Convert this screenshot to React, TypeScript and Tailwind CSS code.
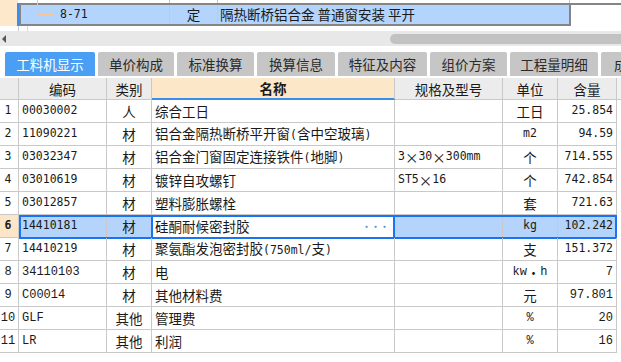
import React from 'react';

type Row = {
  n: string;
  code: string;
  type: string;
  name: string;
  spec: string;
  unit: string;
  qty: string;
  serif?: boolean;
};

const rows: Row[] = [
  { n: '1', code: '00030002', type: '人', name: '综合工日', spec: '', unit: '工日', qty: '25.854' },
  { n: '2', code: '11090221', type: '材', name: '铝合金隔热断桥平开窗(含中空玻璃)', spec: '', unit: 'm2', qty: '94.59' },
  { n: '3', code: '03032347', type: '材', name: '铝合金门窗固定连接铁件(地脚)', spec: '3×30×300mm', unit: '个', qty: '714.555' },
  { n: '4', code: '03010619', type: '材', name: '镀锌自攻螺钉', spec: 'ST5×16', unit: '个', qty: '742.854' },
  { n: '5', code: '03012857', type: '材', name: '塑料膨胀螺栓', spec: '', unit: '套', qty: '721.63' },
  { n: '6', code: '14410181', type: '材', name: '硅酮耐候密封胶', spec: '', unit: 'kg', qty: '102.242' },
  { n: '7', code: '14410219', type: '材', name: '聚氨酯发泡密封胶(750ml/支)', spec: '', unit: '支', qty: '151.372' },
  { n: '8', code: '34110103', type: '材', name: '电', spec: '', unit: 'kw·h', qty: '7', serif: true },
  { n: '9', code: 'C00014', type: '材', name: '其他材料费', spec: '', unit: '元', qty: '97.801', serif: true },
  { n: '10', code: 'GLF', type: '其他', name: '管理费', spec: '', unit: '%', qty: '20', serif: true },
  { n: '11', code: 'LR', type: '其他', name: '利润', spec: '', unit: '%', qty: '16', serif: true },
];

const tabs = [
  { label: '工料机显示', w: 'w-[90px]' },
  { label: '单价构成', w: 'w-[76px]' },
  { label: '标准换算', w: 'w-[77px]' },
  { label: '换算信息', w: 'w-[78px]' },
  { label: '特征及内容', w: 'w-[89px]' },
  { label: '组价方案', w: 'w-[77px]' },
  { label: '工程量明细', w: 'w-[88px]' },
  { label: '成本分析', w: 'w-[80px]' },
];

// latin runs get a narrow mono face, the rest stays in the CJK face
function Txt({ s, serif }: { s: string; serif?: boolean }) {
  const parts = s.split(/([\x21-\x7e]+)/).filter(Boolean);
  return (
    <>
      {parts.map((p, i) =>
        /^[\x21-\x7e]+$/.test(p) ? (
          <span
            key={i}
            className={
              serif
                ? "font-['Liberation_Mono',monospace] text-[12px]"
                : "font-['DejaVu_Sans_Mono',monospace] text-[11.5px]"
            }
          >
            {p}
          </span>
        ) : (
          <span key={i}>{p}</span>
        )
      )}
    </>
  );
}

const cols = 'grid grid-cols-[19px_88px_45px_243px_108px_55px_59px]';
const cell = 'border-r border-b border-[#c9c9c9] flex items-center overflow-hidden whitespace-nowrap';

export default function App() {
  return (
    <div className="w-[621px] h-[362px] overflow-hidden bg-white text-[13.5px] text-[#1a1a1a] font-['Noto_Sans_CJK_SC',sans-serif]">
      {/* upper tree grid, selected row */}
      <div className="relative h-[26px]">
        <div className="flex h-[3px]">
          <div className="w-[18px] bg-[#fde8cc]" />
          <div className="w-[152px] border-r border-[#c9c9c9]" />
          <div className="w-[48px] border-r border-[#c9c9c9]" />
          <div className="w-[352px] border-r border-[#c9c9c9]" />
        </div>
        <div className="flex h-[23px]">
          <div className="w-[17px] bg-[#fde8cc]" />
          <div className="w-[2px] bg-[#3b8cf0]" />
          <div className="flex w-[552px] bg-[#b3d4fc] border-2 border-[#858585]">
            <div className="w-[149px] border-r border-[#c3c9d4] flex items-center pl-[39px]">
              <Txt s="8-71" />
            </div>
            <div className="w-[48px] border-r border-[#c3c9d4] flex items-center justify-center">定</div>
            <div className="flex-1 flex items-center pl-[2px] whitespace-nowrap">隔热断桥铝合金 普通窗安装 平开</div>
          </div>
          <div className="flex-1 border-t-2 border-[#858585]" />
        </div>
        <svg className="absolute left-0 top-0" width="60" height="20">
          <path d="M37.5 0 V14.5 H53" fill="none" stroke="#f7c58c" strokeWidth="1" />
        </svg>
      </div>
      <div className="flex h-[5px]">
        <div className="w-[19px] border-r border-[#c9c9c9]" />
        <div className="w-[9px] border-r border-[#f3d2ad]" />
      </div>

      {/* horizontal scrollbar */}
      <div className="flex h-[15px] items-center bg-[#e8e8e8]">
        <svg className="ml-[2px]" width="5" height="8">
          <path d="M4 0 L0 4 L4 8 Z" fill="#555" />
        </svg>
        <div className="flex-1" />
        <div className="h-[10px] w-[231px] rounded-l-full bg-[#c2c2c2]" />
      </div>
      <div className="h-[6px]" />

      {/* tabs */}
      <div className="flex h-[24px] gap-[3px] pl-[5px] whitespace-nowrap">
        {tabs.map((t, i) => (
          <div
            key={t.label}
            className={`${t.w} shrink-0 rounded-t-[2px] flex items-center justify-center ${
              i === 0 ? 'bg-[#4a9ff5] text-white' : 'bg-[#c6c6c6] text-[#2b2b2b]'
            }`}
          >
            {t.label}
          </div>
        ))}
      </div>
      <div className="h-[2px]" />

      {/* header */}
      <div className="flex h-[22px] bg-[#ececec]">
        <div className={`${cols} h-full`}>
          <div className={cell} />
          <div className={`${cell} justify-center`}>编码</div>
          <div className={`${cell} justify-center`}>类别</div>
          <div className="flex items-center justify-center border-r border-b-2 border-r-[#c9c9c9] border-b-[#3a8ee6] bg-[#fde7c9] font-bold">
            名称
          </div>
          <div className={`${cell} justify-center`}>规格及型号</div>
          <div className={`${cell} justify-center`}>单位</div>
          <div className={`${cell} justify-center`}>含量</div>
        </div>
        <div className="flex-1 border-b border-[#c9c9c9] bg-[#f2f2f2]" />
      </div>

      {/* body */}
      {rows.map((r) => {
        const sel = r.n === '6';
        const bg = sel ? 'bg-[#b4d4fb]' : '';
        return (
          <div key={r.n} className={`relative ${cols} h-[23px]`}>
            <div
              className={`${cell} justify-center pr-[2px] ${
                sel ? 'bg-[#fde6c8] font-bold' : ''
              }`}
            >
              <Txt s={r.n} serif={r.serif} />
            </div>
            <div className={`${cell} pl-[3px] ${bg}`}>
              <Txt s={r.code} serif={r.serif} />
            </div>
            <div className={`${cell} justify-center ${bg}`}>{r.type}</div>
            <div className={`${cell} pl-[3px] justify-between`}>
              <span>
                <Txt s={r.name} />
              </span>
              {sel && <span className="mr-[5px] text-[9px] font-bold leading-none text-[#5b9bd5]">···</span>}
            </div>
            <div className={`${cell} pl-[3px] ${bg}`}>
              <Txt s={r.spec} />
            </div>
            <div className={`${cell} justify-center ${bg}`}>
              <Txt s={r.unit} serif={r.serif} />
            </div>
            <div className={`${cell} justify-end pr-[3px] ${bg}`}>
              <Txt s={r.qty} serif={r.serif} />
            </div>
            {sel && (
              <>
                <div className="pointer-events-none absolute left-[19px] top-0 h-[24px] w-[598px] border-2 border-[#1a73f0]" />
                <div className="pointer-events-none absolute left-[151px] top-0 h-[24px] w-[244px] border-2 border-[#1a73f0]" />
              </>
            )}
          </div>
        );
      })}
    </div>
  );
}
